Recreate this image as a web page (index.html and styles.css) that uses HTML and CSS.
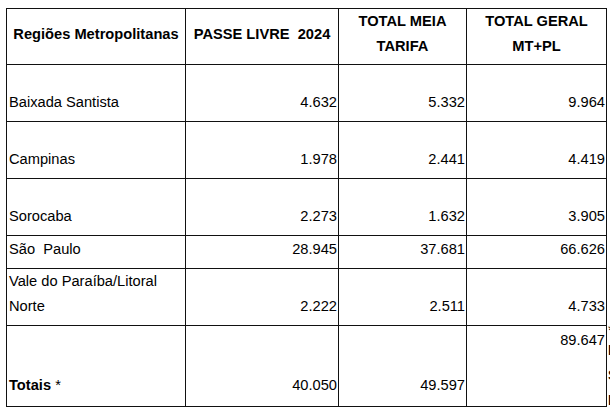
FILE: index.html
```html
<!DOCTYPE html>
<html lang="pt-BR">
<head>
<meta charset="utf-8">
<title>Regiões Metropolitanas</title>
<link rel="stylesheet" href="styles.css">
</head>
<body>
<table class="grid">
  <colgroup>
    <col class="c1"><col class="c2"><col class="c3"><col class="c4">
  </colgroup>
  <tr class="r-head">
    <th>Regiões Metropolitanas</th>
    <th>PASSE LIVRE&nbsp; 2024</th>
    <th>TOTAL MEIA<br>TARIFA</th>
    <th>TOTAL GERAL<br>MT+PL</th>
  </tr>
  <tr class="r-tall">
    <td class="name">Baixada Santista</td>
    <td>4.632</td>
    <td>5.332</td>
    <td>9.964</td>
  </tr>
  <tr class="r-tall">
    <td class="name">Campinas</td>
    <td>1.978</td>
    <td>2.441</td>
    <td>4.419</td>
  </tr>
  <tr class="r-tall">
    <td class="name">Sorocaba</td>
    <td>2.273</td>
    <td>1.632</td>
    <td>3.905</td>
  </tr>
  <tr class="r-short">
    <td class="name">São&nbsp; Paulo</td>
    <td>28.945</td>
    <td>37.681</td>
    <td>66.626</td>
  </tr>
  <tr class="r-tall">
    <td class="name">Vale do Paraíba/Litoral<br>Norte</td>
    <td>2.222</td>
    <td>2.511</td>
    <td>4.733</td>
  </tr>
  <tr class="r-total">
    <td class="name"><b>Totais</b> *</td>
    <td>40.050</td>
    <td>49.597</td>
    <td class="top">89.647</td>
  </tr>
</table>
<div class="note">
  <span class="star">*</span>
  <span class="line">Números</span>
  <span class="line">Sujeitos</span>
  <span class="line">Período</span>
</div>
</body>
</html>
```

FILE: styles.css
```css
html, body {
  margin: 0;
  padding: 0;
  overflow: hidden;
  background: #ffffff;
}

body {
  display: flex;
  align-items: flex-start;
  font-family: "Liberation Sans", Arial, sans-serif;
  font-size: 14.667px;
  color: #000000;
}

.grid {
  flex-shrink: 0;
  border-collapse: collapse;
  table-layout: fixed;
  width: 600px;
  margin: 8px 0 0 6px;
}

.c1 { width: 179px; }
.c2 { width: 153px; }
.c3 { width: 128px; }
.c4 { width: 140px; }

.grid th,
.grid td {
  border: 1px solid #111111;
  line-height: 25px;
}

.grid th {
  font-weight: bold;
  text-align: center;
  vertical-align: middle;
  padding: 0 2px 5px;
}

.grid td {
  text-align: right;
  vertical-align: bottom;
  padding: 0 1px 6px 1px;
  white-space: nowrap;
}

.grid td.name {
  text-align: left;
  padding-left: 2px;
}

.grid td.top {
  vertical-align: top;
  padding-top: 2px;
}

.r-head { height: 56px; }
.r-tall { height: 57px; }
.r-short { height: 33px; }
.r-total { height: 81px; }

.r-total td { padding-bottom: 8px; }

.note {
  flex-shrink: 0;
  display: flex;
  flex-direction: column;
  margin: 323px 0 0 1px;
  white-space: nowrap;
}

.star {
  line-height: 15px;
}

.line {
  font-weight: bold;
  line-height: 25px;
}
```
